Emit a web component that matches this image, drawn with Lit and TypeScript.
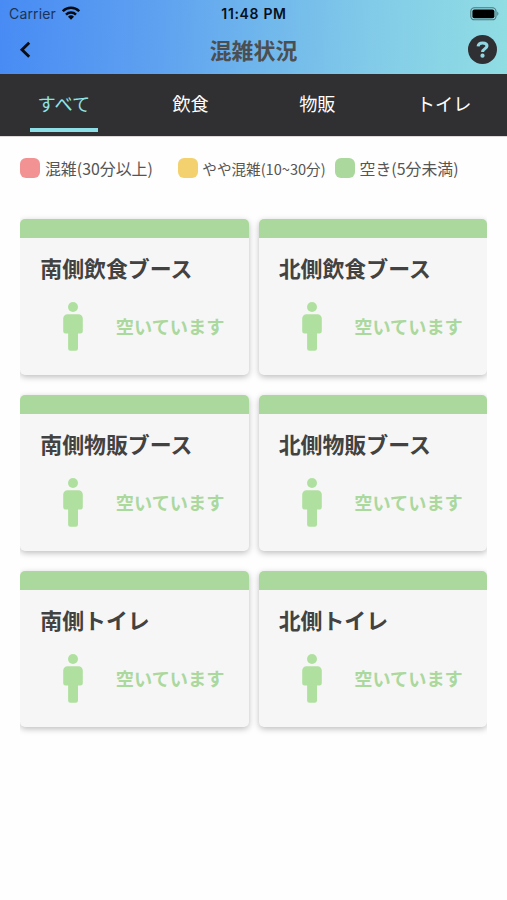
import { LitElement, html, css } from "lit";
import { customElement, property } from "lit/decorators.js";

@customElement("booth-card")
class BoothCard extends LitElement {
  @property() name = "";
  @property() status = "";

  static styles = css`
    :host {
      display: block;
      height: 156px;
      border-radius: 5px;
      background: #f6f6f6;
      box-shadow: 0 2px 6px rgba(0, 0, 0, 0.26);
    }
    .level {
      height: 19px;
      border-radius: 5px 5px 0 0;
      background: #abd89d;
    }
    .name {
      padding: 15px 0 0 20px;
      font-size: 21.9px;
      line-height: 30px;
      font-weight: 700;
      color: #424242;
      white-space: nowrap;
    }
    .state {
      display: flex;
      align-items: center;
      height: 49px;
      margin-top: 19px;
      padding-left: 43px;
      color: #abd89d;
      font-size: 18.2px;
      font-weight: 700;
      line-height: 26px;
      white-space: nowrap;
    }
    .state span {
      margin-top: -2px;
    }
    .person {
      flex: none;
      width: 20px;
      height: 49px;
      margin-right: 32.5px;
      fill: #b0e0a0;
    }
  `;

  render() {
    return html`
      <div class="level"></div>
      <div class="name">${this.name}</div>
      <div class="state">
        <svg class="person" viewBox="0 0 20 49">
          <circle cx="10" cy="5" r="5" />
          <path d="M4.5 12.3h11a4.3 4.3 0 0 1 4.3 4.3v12.6a2.4 2.4 0 0 1-2.4 2.4H15v15a2.2 2.2 0 0 1-2.2 2.2H7.3a2.2 2.2 0 0 1-2.2-2.2v-15H2.6a2.4 2.4 0 0 1-2.4-2.4V16.6a4.3 4.3 0 0 1 4.3-4.3z" />
        </svg>
        <span>${this.status}</span>
      </div>
    `;
  }
}

@customElement("app-root")
class AppRoot extends LitElement {
  static styles = css`
    :host {
      display: block;
      height: 900px;
      overflow: hidden;
      background: #fefefe;
      font-family: "Noto Sans CJK JP", sans-serif;
    }
    .top {
      height: 74px;
      background: linear-gradient(92deg, #488bf4 0%, #5fa2f0 32%, #70b7ec 52%, #84cde8 76%, #90dde3 100%);
    }
    .status {
      display: grid;
      grid-template-columns: 1fr auto 1fr;
      align-items: center;
      height: 28px;
      padding: 0 8px 0 9px;
      font-family: Inter, sans-serif;
      font-size: 14px;
      line-height: 20px;
      color: #08111d;
    }
    .carrier {
      display: flex;
      align-items: center;
      gap: 6px;
      color: #1b3458;
      letter-spacing: 0.15px;
    }
    .wifi {
      width: 18px;
      height: 14px;
      margin-top: -2px;
    }
    .time {
      font-size: 14px;
      font-weight: 600;
      letter-spacing: 0.65px;
    }
    .battery {
      justify-self: end;
      width: 30px;
      height: 14px;
      margin-right: -1px;
      margin-top: -1px;
    }
    .nav {
      display: grid;
      grid-template-columns: 1fr auto 1fr;
      align-items: center;
      height: 44px;
      padding: 0 10px;
    }
    .back {
      width: 14px;
      height: 18px;
      margin-left: 8px;
    }
    .heading {
      font-size: 21.9px;
      line-height: 32px;
      font-weight: 700;
      color: #4b4f52;
    }
    .help {
      justify-self: end;
      width: 29px;
      height: 29px;
      margin-top: -1px;
    }
    .tabs {
      display: grid;
      grid-template-columns: repeat(4, 1fr);
      height: 62px;
      background: #303032;
      border-bottom: 1px solid #ddd8d7;
    }
    .tab {
      display: flex;
      flex-direction: column;
      align-items: center;
      color: #fff;
      font-size: 18.2px;
      line-height: 26px;
      padding: 16px 0 0 1px;
    }
    .tab.active {
      color: #8fe4e5;
    }
    .bar {
      width: 68px;
      height: 4px;
      margin-top: 12px;
      background: #8ddfe7;
    }
    .legend {
      display: flex;
      align-items: center;
      height: 24px;
      margin: 20px 0 0 20.4px;
      color: #555;
      font-size: 15.9px;
      line-height: 24px;
      white-space: nowrap;
    }
    .entry {
      display: flex;
      align-items: center;
      gap: 4.6px;
    }
    .entry span {
      margin-top: -1px;
    }
    .crowded {
      width: 157.3px;
    }
    .medium {
      width: 157.3px;
    }
    .small {
      font-size: 14.6px;
    }
    .swatch {
      width: 20px;
      height: 20px;
      margin-top: -2px;
      border-radius: 6px;
    }
    .red {
      background: #f39293;
    }
    .yellow {
      background: #f3d16f;
    }
    .green {
      background: #abd89d;
    }
    .cards {
      display: grid;
      grid-template-columns: 228.6px 228.6px;
      gap: 20px 9.8px;
      margin: 30px 20px 0 20px;
      padding: 8px 0 20px 0.3px;
      overflow: hidden;
    }
  `;

  private tabs = ["すべて", "飲食", "物販", "トイレ"];
  private booths = [
    "南側飲食ブース",
    "北側飲食ブース",
    "南側物販ブース",
    "北側物販ブース",
    "南側トイレ",
    "北側トイレ",
  ];

  render() {
    return html`
      <header class="top">
        <div class="status">
          <div class="carrier">
            <span>Carrier</span>
            <svg class="wifi" viewBox="0 0 18 14">
              <g fill="none" stroke="#050a12" stroke-width="2.5">
                <path d="M.8 5.2a11.7 11.7 0 0 1 16.4 0" />
                <path d="M4 8.6a7.2 7.2 0 0 1 10 0" />
              </g>
              <path d="M9 13.8 6 10.8a4.3 4.3 0 0 1 6 0z" fill="#050a12" />
            </svg>
          </div>
          <span class="time">11:48 PM</span>
          <svg class="battery" viewBox="0 0 30 14">
            <rect x=".8" y=".8" width="25.2" height="12" rx="3.6" fill="none" stroke="#4b777d" stroke-width="1.1" />
            <rect x="2.4" y="2.4" width="22" height="8.8" rx="2" />
            <path d="M27.3 4.6q2.2 2.2 0 4.4z" fill="#4b777d" />
          </svg>
        </div>
        <div class="nav">
          <svg class="back" viewBox="0 0 14 18">
            <path d="M11.2 1.8 4 8.8l7.2 7" fill="none" stroke="#0a0d14" stroke-width="2.9" />
          </svg>
          <span class="heading">混雑状況</span>
          <svg class="help" viewBox="0 0 29 29">
            <circle cx="14.5" cy="14.5" r="14.5" fill="#2f3034" />
            <path d="M10.1 11.3c.2-2.4 2-3.3 4.5-3.3 2.7 0 4.4 1 4.4 3 0 2.8-4.4 2.6-4.4 5.9" fill="none" stroke="#90d9e4" stroke-width="3" />
            <circle cx="14.5" cy="20.7" r="2.1" fill="#90d9e4" />
          </svg>
        </div>
      </header>
      <nav class="tabs">
        ${this.tabs.map(
          (t, i) => html`<div class="tab ${i === 0 ? "active" : ""}">
            <span>${t}</span>${i === 0 ? html`<div class="bar"></div>` : ""}
          </div>`
        )}
      </nav>
      <div class="legend">
        <div class="entry crowded"><i class="swatch red"></i><span>混雑(30分以上)</span></div>
        <div class="entry medium"><i class="swatch yellow"></i><span class="small">やや混雑(10~30分)</span></div>
        <div class="entry"><i class="swatch green"></i><span>空き(5分未満)</span></div>
      </div>
      <main class="cards">
        ${this.booths.map((b) => html`<booth-card .name=${b} .status=${"空いています"}></booth-card>`)}
      </main>
    `;
  }
}
